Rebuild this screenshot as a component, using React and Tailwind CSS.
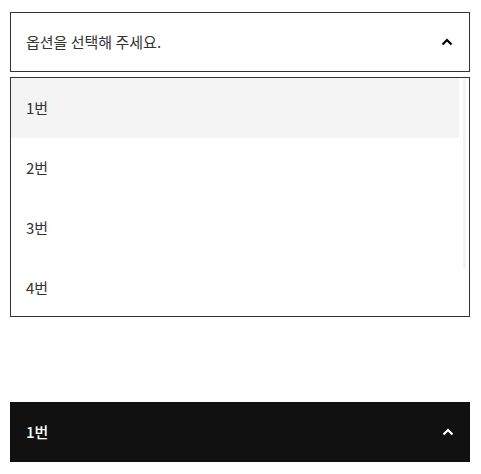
import { useState } from 'react';

const options = ['1번', '2번', '3번', '4번'];

function ChevronUp({ className }) {
  return (
    <svg viewBox="0 0 12 8" className={className} fill="none">
      <path d="M1.5 6.5 L6 2 L10.5 6.5" stroke="currentColor" strokeWidth="2.2" strokeLinejoin="miter" />
    </svg>
  );
}

export default function App() {
  const [selected, setSelected] = useState(options[0]);
  const [hovered, setHovered] = useState(0);

  return (
    <div className="bg-white w-[481px] h-[474px] pl-[10px] pr-[11px] pt-[12px] font-['Noto_Sans_CJK_KR','Noto_Sans',sans-serif]">
      {/* Select */}
      <button className="w-full h-[60px] border border-[#333] flex items-center justify-between pl-[15px] pr-[16px] text-[15px] text-[#333]">
        <span>옵션을 선택해 주세요.</span>
        <ChevronUp className="w-[12px] h-[8px] text-black" />
      </button>

      {/* Options list */}
      <div className="mt-[5px] h-[240px] border border-[#333] flex overflow-hidden">
        <ul className="flex-1">
          {options.map((opt, i) => (
            <li
              key={opt}
              onMouseEnter={() => setHovered(i)}
              onClick={() => setSelected(opt)}
              className={`h-[60px] flex items-center pl-[15px] text-[15px] text-[#333] ${
                i === hovered ? 'bg-[#f4f4f4]' : 'bg-white'
              }`}
            >
              {opt}
            </li>
          ))}
        </ul>
        <div className="w-[10px] pl-[4px]">
          <div className="w-[3px] h-[190px] bg-[#f4f4f4]" />
        </div>
      </div>

      {/* Selected (dark) */}
      <div className="mt-[85px] h-[60px] bg-[#111] flex items-center justify-between pl-[16px] pr-[16px] text-[15px] font-medium text-white">
        <span>{selected}</span>
        <ChevronUp className="w-[12px] h-[8px] text-white" />
      </div>
    </div>
  );
}
